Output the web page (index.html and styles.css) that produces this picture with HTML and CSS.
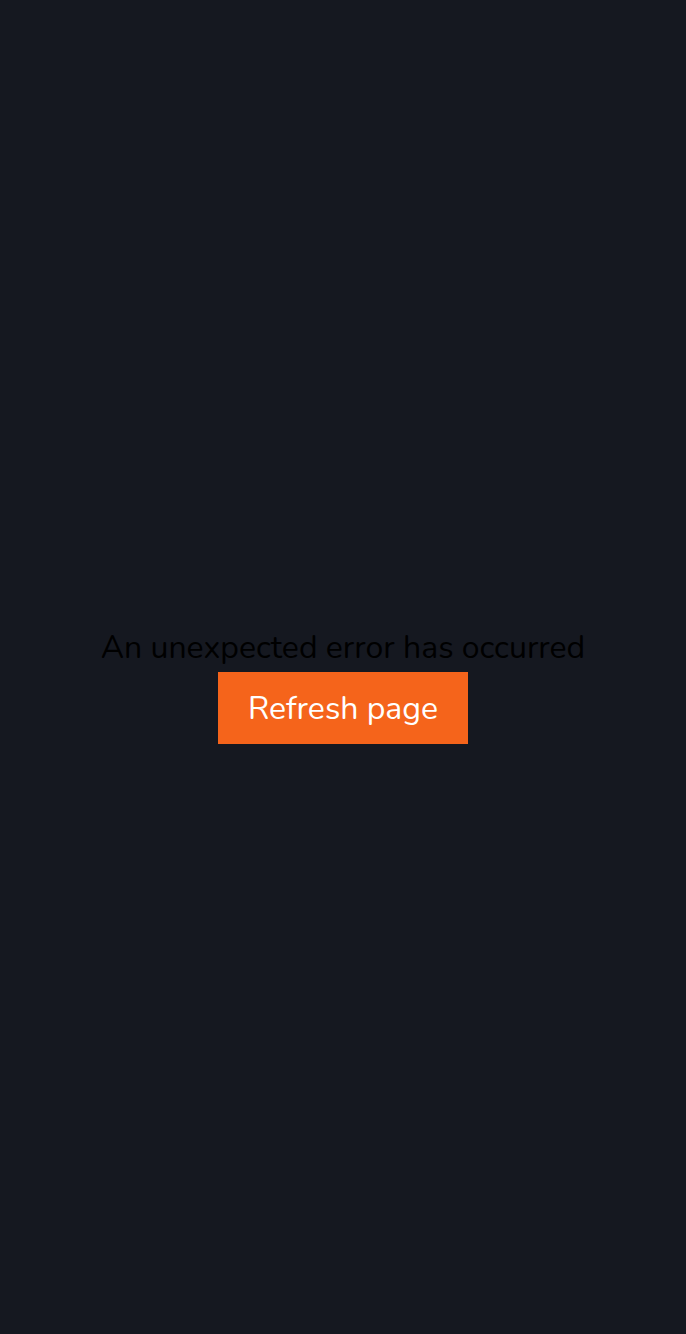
FILE: index.html
```html
<!DOCTYPE html>
<html lang="en">
<head>
<meta charset="utf-8">
<title>Error</title>
<link rel="stylesheet" href="styles.css">
</head>
<body>
<main class="error">
  <p class="error-message">An unexpected error has occurred</p>
  <button class="refresh-btn" type="button">Refresh page</button>
</main>
</body>
</html>
```

FILE: styles.css
```css
html, body {
  margin: 0;
  padding: 0;
  height: 100%;
}
body {
  background: #151820;
  font-family: "Nunito", Lato, "Open Sans", sans-serif;
}
.error {
  min-height: 100%;
  box-sizing: border-box;
  padding-top: 40px;
  display: flex;
  flex-direction: column;
  align-items: center;
  justify-content: center;
  gap: 6px;
}
.error-message {
  margin: 0;
  color: #000;
  font-size: 32px;
  line-height: 36px;
}
.refresh-btn {
  width: 250px;
  height: 72px;
  border: 0;
  background: #f5641b;
  color: #fff;
  font-family: inherit;
  font-size: 32px;
  padding: 0;
  cursor: pointer;
}
```
